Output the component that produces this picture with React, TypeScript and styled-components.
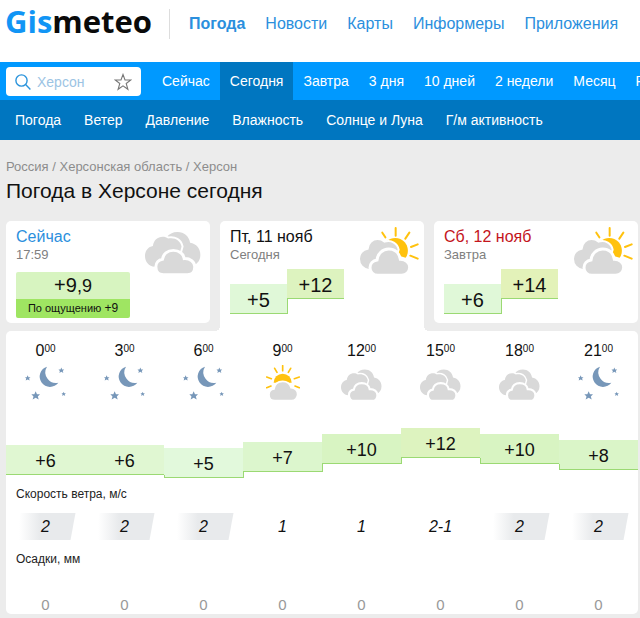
import React from "react";
import styled, { createGlobalStyle, css } from "styled-components";

const GlobalStyle = createGlobalStyle`
  * { box-sizing: border-box; }
  body {
    margin: 0;
    background: #ececec;
    color: #111;
    font-family: "Liberation Sans", Arial, sans-serif;
  }
  a { color: inherit; text-decoration: none; }
`;

const Page = styled.div`
  overflow: hidden;
`;

const Header = styled.header`
  display: flex;
  height: 62px;
  padding: 0 5px;
  background: #fff;
`;

const Logo = styled.a`
  width: 164px;
  flex: none;
  font: 700 31px/42px "Open Sans", "Noto Sans", sans-serif;
  color: #0a0a0a;

  span { color: #1195f5; }
`;

const MainNav = styled.nav`
  display: flex;
  flex: none;
  gap: 20px;
  height: 30px;
  margin-top: 9px;
  padding-left: 19px;
  border-left: 1px solid #ddd;
  font-size: 16px;
  line-height: 30px;
  color: #2b8fdd;
  white-space: nowrap;
`;

const MainLink = styled.a<{ $active?: boolean }>`
  font-weight: ${(p) => (p.$active ? 700 : 400)};
`;

const PeriodBar = styled.div`
  display: flex;
  height: 38px;
  padding-left: 6px;
  background: #0099ff;
`;

const Search = styled.form`
  display: flex;
  flex: none;
  align-items: center;
  gap: 6px;
  width: 135px;
  height: 29px;
  margin: 5px 11px 0 0;
  padding: 0 9px;
  border-radius: 4px;
  background: #fff;
`;

const SearchInput = styled.input`
  flex: 1;
  width: 0;
  padding: 0;
  border: 0;
  outline: 0;
  background: none;
  font: 14px/20px "Liberation Sans", Arial, sans-serif;

  &::placeholder { color: #9cc4e4; opacity: 1; }
`;

const StarButton = styled.button`
  display: flex;
  padding: 0;
  border: 0;
  background: none;
`;

const Periods = styled.nav`
  display: flex;
  white-space: nowrap;
`;

const PeriodLink = styled.a<{ $active?: boolean }>`
  padding: 0 10px;
  font-size: 14px;
  line-height: 38px;
  color: #fff;
  background: ${(p) => (p.$active ? "#0076c0" : "none")};
`;

const TopicNav = styled.nav`
  display: flex;
  gap: 23px;
  height: 40px;
  padding: 0 15px;
  background: #0076c0;
  color: #fff;
  font-size: 14px;
  line-height: 40px;
  white-space: nowrap;
`;

const Main = styled.main`
  padding: 18px 2px 4px 6px;
`;

const Crumbs = styled.nav`
  font-size: 13px;
  line-height: 18px;
  color: #8c8c8c;
`;

const Title = styled.h1`
  margin: 2px 0 18px;
  font-size: 21px;
  font-weight: 400;
  line-height: 25px;
`;

const Cards = styled.div`
  display: grid;
  grid-template-columns: repeat(3, 1fr);
  gap: 10px;
`;

const corner = css`
  content: "";
  position: absolute;
  bottom: 0;
  width: 5px;
  height: 5px;
`;

const Card = styled.a<{ $active?: boolean }>`
  position: relative;
  display: flex;
  justify-content: space-between;
  height: ${(p) => (p.$active ? 110 : 102)}px;
  padding: 6px 5px 0 10px;
  border-radius: ${(p) => (p.$active ? "5px 5px 0 0" : "5px")};
  background: #fff;

  ${(p) =>
    p.$active &&
    css`
      &::before {
        ${corner}
        right: 100%;
        background: radial-gradient(circle at 0 0, #ececec 5px, #fff 5px);
      }
      &::after {
        ${corner}
        left: 100%;
        background: radial-gradient(circle at 100% 0, #ececec 5px, #fff 5px);
      }
    `}
`;

const CardTitle = styled.div<{ $color: string }>`
  font-size: 16px;
  line-height: 20px;
  color: ${(p) => p.$color};
  white-space: nowrap;
`;

const CardNote = styled.div`
  font-size: 13px;
  line-height: 16px;
  color: #808080;
`;

const CardIcon = styled.div<{ $inset?: boolean }>`
  padding: ${(p) => (p.$inset ? "4px 4px 0 0" : "0")};
`;

const NowBox = styled.div`
  width: 114px;
  margin-top: 9px;
  overflow: hidden;
  border-radius: 2px;
  text-align: center;
`;

const NowTemp = styled.div`
  background: #d7f4c0;
  font-size: 20px;
  line-height: 26px;

  small { font-size: 18px; }
`;

const FeelsLike = styled.div`
  background: #9fe562;
  font-size: 11px;
  line-height: 19px;

  span { font-size: 12px; }
`;

const DayRange = styled.div`
  display: flex;
  width: 114px;
  margin-top: 6px;
`;

const TempStep = styled.div<{ $top: number; $rise: number; $tint: string; $line: string; $size: number }>`
  position: relative;
  flex: 1;
  height: 30px;
  margin-top: ${(p) => p.$top}px;
  border-bottom: 1px solid ${(p) => p.$line};
  background: ${(p) => p.$tint};
  font-size: ${(p) => p.$size}px;
  line-height: 32px;
  text-align: center;

  &::before {
    content: "";
    position: absolute;
    left: 0;
    bottom: ${(p) => (p.$rise > 0 ? -p.$rise - 1 : -1)}px;
    width: 1px;
    height: ${(p) => Math.abs(p.$rise)}px;
    background: ${(p) => p.$line};
  }
`;

const Hourly = styled.table`
  width: 100%;
  table-layout: fixed;
  border-collapse: separate;
  border-spacing: 0;
  border-radius: 5px;
  background: #fff;

  th, td {
    padding: 0;
    font-weight: 400;
    text-align: center;
    vertical-align: top;
  }
`;

const HourCell = styled.th`
  height: 32px;

  div {
    padding-top: 11px;
    font-size: 16px;
    line-height: 18px;
  }

  sup {
    font-size: 10px;
    line-height: 0;
    vertical-align: 4px;
  }
`;

const SkyCell = styled.td`
  height: 65px;
`;

const SkyBox = styled.div`
  display: flex;
  align-items: flex-end;
  justify-content: center;
  height: 38px;
`;

const TempCell = styled.td`
  height: 52px;
`;

const LabelCell = styled.th<{ $pad: number }>`
  height: 33px;

  div {
    padding: ${(p) => p.$pad}px 10px 0;
    font-size: 12px;
    line-height: 18px;
    text-align: left;
    color: #222;
  }
`;

const Wind = styled.div<{ $strong: boolean }>`
  width: 60px;
  height: 27px;
  margin: 0 auto;
  clip-path: polygon(5px 0, 100% 0, calc(100% - 5px) 100%, 0 100%);
  background: ${(p) => (p.$strong ? "linear-gradient(90deg, #fff 5%, #e8eaec 40%)" : "none")};
  font-size: 16px;
  font-style: italic;
  line-height: 27px;
`;

const RainCell = styled.td`
  height: 41px;

  div {
    padding-top: 22px;
    font-size: 15px;
    line-height: 19px;
    color: #999;
  }
`;

const GREY = "#d9d9d9";
const SUN = "#ffc20e";

const Clouds = ({ width, height }: { width: number; height: number }) => (
  <svg width={width} height={height} viewBox="434 244 170 132" fill={GREY} aria-label="Пасмурно">
    <path d="M500 262C507 252 518 246 533 246C553 246 568 259 571 279C590 282 602 297 602 315C602 331 594 342 582 347L520 310Z" />
    <path
      d="M464 352C445 351 434 335 434 319C434 303 445 291 458 289C460 272 472 261 488 261C494 261 499 263 504 266C525 262 541 272 545 290L530 345Z"
      stroke="#fff" strokeWidth="12"
    />
    <path d="M464 352C445 351 434 335 434 319C434 303 445 291 458 289C460 272 472 261 488 261C494 261 499 263 504 266C525 262 541 272 545 290L530 345Z" />
    <path
      d="M490 376C475 376 467 365 467 352C467 340 475 331 487 329C489 313 502 302 520 302C538 302 551 313 553 327C571 326 585 337 585 352C585 367 575 376 563 376Z"
      stroke="#fff" strokeWidth="9"
    />
  </svg>
);

const SunClouds = () => (
  <svg width={60} height={48} viewBox="446 50 180 144" fill={GREY} aria-label="Переменная облачность">
    <path d="M530 92C540 83 556 80 570 86C586 93 595 110 592 128C591 134 589 138 586 142L545 130Z" fill={SUN} />
    <path d="M516 67L525 81M556 53V76M597 67L585 85M622 102L602 110M600 136L622 145" stroke={SUN} strokeWidth="6" strokeLinecap="round" />
    <path
      d="M478 180C458 177 446 163 446 146C446 130 457 117 472 115C473 98 486 86 502 86C510 86 517 89 523 94C543 87 562 100 565 118L550 165Z"
      stroke="#fff" strokeWidth="6"
    />
    <path
      d="M503 195C488 195 479 184 479 172C479 160 488 151 500 149C502 131 516 116 535 116C554 116 567 129 570 147C586 147 598 158 598 171C598 185 587 195 574 195Z"
      stroke="#fff" strokeWidth="9"
    />
  </svg>
);

const SunCloud = () => (
  <svg width={34} height={36} viewBox="78 90 102 108" fill={GREY} aria-label="Малооблачно">
    <path d="M101 143A27 27 0 1 1 155 143Z" fill={SUN} />
    <path
      d="M128 92V107M104 100L111 112M152 100L145 112M80 126L94 131M178 126L163 131M80 158L93 153M178 158L165 153"
      stroke={SUN} strokeWidth="5" strokeLinecap="round"
    />
    <path
      d="M105 197C93 197 87 188 87 179C87 169 94 163 102 162C104 147 114 139 128 139C141 139 150 146 153 158C165 158 173 167 173 178C173 188 165 197 155 197Z"
      stroke="#fff" strokeWidth="5"
    />
  </svg>
);

const STAR = "M0 -10L3 -3L10 -3L5 2L7 9L0 5L-7 9L-5 2L-10 -3L-3 -3Z";

const Moon = () => (
  <svg width={41} height={35} viewBox="75 92 123 105" fill="#7797b9" aria-label="Ясно">
    <path d="M141 94A31 31 0 1 0 175 142A32 32 0 0 1 141 94Z" />
    <path d={STAR} transform="translate(83 128) scale(.85)" />
    <path d={STAR} transform="translate(184 105) scale(.85)" />
    <path d={STAR} transform="translate(107 181) scale(1.3)" />
    <path d={STAR} transform="translate(191 176) scale(.65)" />
  </svg>
);

type Sky = "moon" | "sun" | "clouds";

const SkyIcon = ({ sky }: { sky: Sky }) =>
  sky === "moon" ? <Moon /> : sky === "sun" ? <SunCloud /> : <Clouds width={41} height={32} />;

interface Hour {
  hour: number;
  sky: Sky;
  temp: number;
  top: number;
  tint: string;
  wind: string;
}

const HOURS: Hour[] = [
  { hour: 0, sky: "moon", temp: 6, top: 17, tint: "#e0f7d2", wind: "2" },
  { hour: 3, sky: "moon", temp: 6, top: 17, tint: "#e0f7d2", wind: "2" },
  { hour: 6, sky: "moon", temp: 5, top: 20, tint: "#e2f9dc", wind: "2" },
  { hour: 9, sky: "sun", temp: 7, top: 14, tint: "#dcf6cd", wind: "1" },
  { hour: 12, sky: "clouds", temp: 10, top: 6, tint: "#d8f4c2", wind: "1" },
  { hour: 15, sky: "clouds", temp: 12, top: 0, tint: "#ddf3bf", wind: "2-1" },
  { hour: 18, sky: "clouds", temp: 10, top: 6, tint: "#d8f4c2", wind: "2" },
  { hour: 21, sky: "moon", temp: 8, top: 12, tint: "#daf5c8", wind: "2" },
];

const LINE = "#9bd973";

interface Day {
  title: string;
  note: string;
  color: string;
  low: number;
  high: number;
  highTint: string;
  active?: boolean;
}

const DAYS: Day[] = [
  { title: "Пт, 11 нояб", note: "Сегодня", color: "#111", low: 5, high: 12, highTint: "#ddf3bf", active: true },
  { title: "Сб, 12 нояб", note: "Завтра", color: "#c4151c", low: 6, high: 14, highTint: "#e3f2b9" },
];

const MAIN_LINKS = ["Погода", "Новости", "Карты", "Информеры", "Приложения"];
const PERIODS = ["Сейчас", "Сегодня", "Завтра", "3 дня", "10 дней", "2 недели", "Месяц", "Радар"];
const TOPICS = ["Погода", "Ветер", "Давление", "Влажность", "Солнце и Луна", "Г/м активность"];

export default function App() {
  return (
    <Page>
      <GlobalStyle />
      <Header>
        <Logo href="#"><span>Gis</span>meteo</Logo>
        <MainNav>
          {MAIN_LINKS.map((label, i) => (
            <MainLink key={label} href="#" $active={i === 0}>{label}</MainLink>
          ))}
        </MainNav>
      </Header>
      <PeriodBar>
        <Search>
          <svg width="16" height="16" viewBox="0 0 16 16" fill="none" stroke="#2b94dc" strokeWidth="1.4" aria-hidden="true">
            <circle cx="6.5" cy="6.5" r="5.6" />
            <path d="M10.6 10.6L15.4 15.4" />
          </svg>
          <SearchInput type="text" placeholder="Херсон" aria-label="Поиск города" />
          <StarButton type="button" aria-label="В избранное">
            <svg width="18" height="18" viewBox="0 0 18 18" fill="none" stroke="#777" strokeWidth="1.1">
              <path d="M9 1.5L11 7H16.8L12.2 10.5L13.9 16.3L9 12.9L4.1 16.3L5.8 10.5L1.2 7H7Z" />
            </svg>
          </StarButton>
        </Search>
        <Periods>
          {PERIODS.map((label, i) => (
            <PeriodLink key={label} href="#" $active={i === 1}>{label}</PeriodLink>
          ))}
        </Periods>
      </PeriodBar>
      <TopicNav>
        {TOPICS.map((label) => <a key={label} href="#">{label}</a>)}
      </TopicNav>
      <Main>
        <Crumbs>
          <a href="#">Россия</a> / <a href="#">Херсонская область</a> / <a href="#">Херсон</a>
        </Crumbs>
        <Title>Погода в Херсоне сегодня</Title>
        <Cards>
          <Card href="#">
            <div>
              <CardTitle $color="#2b8fdd">Сейчас</CardTitle>
              <CardNote>17:59</CardNote>
              <NowBox>
                <NowTemp>+9<small>,9</small></NowTemp>
                <FeelsLike>По ощущению <span>+9</span></FeelsLike>
              </NowBox>
            </div>
            <CardIcon $inset><Clouds width={56} height={44} /></CardIcon>
          </Card>
          {DAYS.map((day) => (
            <Card key={day.title} href="#" $active={day.active}>
              <div>
                <CardTitle $color={day.color}>{day.title}</CardTitle>
                <CardNote>{day.note}</CardNote>
                <DayRange>
                  <TempStep $top={15} $rise={0} $tint="#e0f8d8" $line={LINE} $size={20}>+{day.low}</TempStep>
                  <TempStep $top={0} $rise={15} $tint={day.highTint} $line={LINE} $size={20}>+{day.high}</TempStep>
                </DayRange>
              </div>
              <CardIcon><SunClouds /></CardIcon>
            </Card>
          ))}
        </Cards>
        <Hourly>
          <thead>
            <tr>
              {HOURS.map((h) => (
                <HourCell key={h.hour} scope="col"><div>{h.hour}<sup>00</sup></div></HourCell>
              ))}
            </tr>
          </thead>
          <tbody>
            <tr>
              {HOURS.map((h) => <SkyCell key={h.hour}><SkyBox><SkyIcon sky={h.sky} /></SkyBox></SkyCell>)}
            </tr>
            <tr>
              {HOURS.map((h, i) => (
                <TempCell key={h.hour}>
                  <TempStep $top={h.top} $rise={i ? HOURS[i - 1].top - h.top : 0} $tint={h.tint} $line={LINE} $size={18}>
                    +{h.temp}
                  </TempStep>
                </TempCell>
              ))}
            </tr>
            <tr><LabelCell $pad={5} colSpan={8} scope="rowgroup"><div>Скорость ветра, м/с</div></LabelCell></tr>
            <tr>
              {HOURS.map((h) => <td key={h.hour}><Wind $strong={h.wind === "2"}>{h.wind}</Wind></td>)}
            </tr>
            <tr><LabelCell $pad={10} colSpan={8} scope="rowgroup"><div>Осадки, мм</div></LabelCell></tr>
            <tr>
              {HOURS.map((h) => <RainCell key={h.hour}><div>0</div></RainCell>)}
            </tr>
          </tbody>
        </Hourly>
      </Main>
    </Page>
  );
}
